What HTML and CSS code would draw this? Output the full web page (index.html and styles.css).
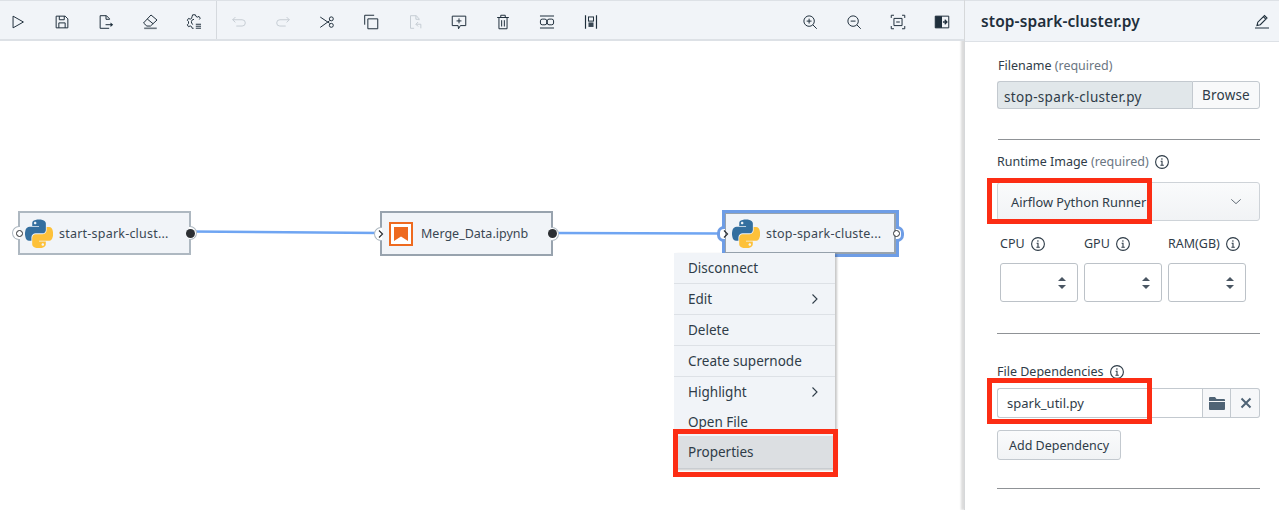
FILE: index.html
```html
<!DOCTYPE html>
<html lang="en">
<head>
<meta charset="utf-8">
<title>stop-spark-cluster.py</title>
<link rel="stylesheet" href="styles.css">
</head>
<body>
<svg class="defs" width="0" height="0" aria-hidden="true">
  <symbol id="py" viewBox="0 0 111 112">
    <path fill="#346f9f" d="M54.9.9c-4.6 0-9 .4-12.8 1.1C30.7 4 28.7 8.2 28.7 16v10.3h27v3.4H18.6c-7.8 0-14.7 4.7-16.8 13.7-2.5 10.3-2.6 16.7 0 27.4 1.9 8 6.5 13.7 14.3 13.7h9.3V72.1c0-8.9 7.7-16.7 16.8-16.7h27c7.5 0 13.5-6.2 13.5-13.7V16c0-7.3-6.2-12.8-13.5-14C65.8 1.2 59.5.9 54.9.9zM40.3 9.2c2.8 0 5.1 2.3 5.1 5.1s-2.3 5.1-5.1 5.1-5.1-2.3-5.1-5.1 2.3-5.1 5.1-5.1z"/>
    <path fill="#fdc13a" d="M85.8 29.7v12c0 9.3-7.9 17.2-16.8 17.2H42c-7.4 0-13.5 6.3-13.5 13.7v25.7c0 7.3 6.4 11.6 13.5 13.7 8.5 2.5 16.7 3 27 0 6.8-2 13.5-5.9 13.5-13.7V88H55.5v-3.4h40.5c7.8 0 10.8-5.5 13.5-13.7 2.8-8.5 2.7-16.6 0-27.4-1.9-7.8-5.6-13.7-13.5-13.7H85.8zM70.6 94.8c2.8 0 5.1 2.3 5.1 5.1s-2.3 5.1-5.1 5.1-5.1-2.3-5.1-5.1 2.3-5.1 5.1-5.1z"/>
  </symbol>
  <symbol id="info" viewBox="0 0 16 16">
    <circle cx="8" cy="8" r="6.4" fill="none" stroke="#2c3a46" stroke-width="1.1"/>
    <path d="M6.4 11.3h3.4M8 11.3V7.2H6.6" fill="none" stroke="#2c3a46" stroke-width="1.1"/>
    <circle cx="7.9" cy="5" r=".8" fill="#2c3a46"/>
  </symbol>
  <symbol id="spin" viewBox="0 0 8 14">
    <path d="M4 1 8 5H0zM4 13 0 9h8z" fill="#4a5663"/>
  </symbol>
</svg>

<main class="app">
  <section class="editor">
    <div class="toolbar">
      <div class="tool-group">
        <span class="tool"><svg class="ico" viewBox="0 0 20 20"><path d="M4.500 3.500v13L16 10z"/></svg></span>
        <span class="tool"><svg class="ico" viewBox="0 0 20 20"><path d="M3.500 3.500h10l3 3v10h-13zM7 3.500v4h5.500v-4M6.500 16.500v-5.500h7v5.500"/></svg></span>
        <span class="tool"><svg class="ico" viewBox="0 0 20 20"><path d="M14 7V6.500L10.500 3H3.500v14h10M10 3v4h4M9.500 13H16"/><path class="fill" d="M15 10.500 18 13l-3 2.500z"/></svg></span>
        <span class="tool"><svg class="ico" viewBox="0 0 20 20"><path d="M2.800 11.100 11.100 2.200l6.700 5.600-7.300 6.700H6.500zM7 6.700l6.500 5.300"/><path class="thick" d="M3.500 17h14"/></svg></span>
        <span class="tool"><svg class="ico" viewBox="0 0 20 20"><path d="M9.500 17H8l-.7-1.900-1.500-.7-1.900.8-1.300-2 1.300-1.500V9.500L2.600 8l1.300-2 1.900.8 1.500-.8L8 3.500 8.500 2h3l.7 1.800 1.500.8 1.900-.8 1.300 2-1 1.400M10 7a3 3 0 0 0-1 5.800M12 12.500h5.800M12 14.700h5.800M12 16.900h5.800"/></svg></span>
      </div>
      <div class="tool-group second">
        <span class="tool off"><svg class="ico" viewBox="0 0 20 20"><path d="M3 7.500h10.500a3.500 3.500 0 0 1 0 7H7M3 7.500 6 4.500M3 7.500l3 3"/></svg></span>
        <span class="tool off"><svg class="ico" viewBox="0 0 20 20"><path d="M17 7.500H6.500a3.500 3.500 0 0 0 0 7H13M17 7.500l-3-3M17 7.500l-3 3"/></svg></span>
        <span class="tool"><svg class="ico" viewBox="0 0 20 20"><path d="M2.500 4.500 13 11.500M2.500 16 13 8.500"/><circle cx="14.800" cy="6.500" r="2.200"/><circle cx="14.800" cy="13.700" r="2.200"/></svg></span>
        <span class="tool"><svg class="ico" viewBox="0 0 20 20"><path d="M6.500 6.500h11v11h-11zM3 13V2.500h10.500"/></svg></span>
        <span class="tool off"><svg class="ico" viewBox="0 0 20 20"><path d="M14.500 8V6.500L11.500 3H5v14h4M11 3v4h3.500M11 12.500h5.500V17M11 12.500l2.500-2.500M11 12.500l2.500 2.500"/></svg></span>
        <span class="tool"><svg class="ico" viewBox="0 0 20 20"><path d="M2.500 3.500h15v10.500H11.500l-2 3.500-.5-3.500H2.500zM10 6v5.500M7.300 8.800h5.400"/></svg></span>
        <span class="tool"><svg class="ico" viewBox="0 0 20 20"><path d="M3.500 5h13M7.500 5V2.500h5V5M5.500 5v12.500h9V5M8.500 8v7M11.500 8v7"/></svg></span>
        <span class="tool"><svg class="ico" viewBox="0 0 20 20"><path class="bar" d="M2.200 3.300h15.600M2.200 16.700h15.600"/><rect x="2.700" y="6.800" width="7" height="6.300" rx="2"/><rect x="10.300" y="6.800" width="7" height="6.300" rx="2"/></svg></span>
        <span class="tool"><svg class="ico" viewBox="0 0 20 20"><path class="bar" d="M3.900 2.500v15M16.100 2.500v15"/><rect x="7.200" y="4.400" width="5.600" height="4.600"/><rect class="fill" x="7.200" y="10.500" width="5.600" height="5"/></svg></span>
      </div>
      <div class="tool-group end">
        <span class="tool"><svg class="ico" viewBox="0 0 20 20"><circle cx="9" cy="9" r="5.800"/><path d="m13.200 13.200 4.300 4.300M9 6.300v5.400M6.300 9h5.400"/></svg></span>
        <span class="tool"><svg class="ico" viewBox="0 0 20 20"><circle cx="9" cy="9" r="5.800"/><path d="m13.200 13.200 4.300 4.300M6.300 9h5.400"/></svg></span>
        <span class="tool"><svg class="ico" viewBox="0 0 20 20"><path d="M2.500 5.500v-3h3M14.500 2.500h3v3M17.500 14.500v3h-3M5.500 17.500h-3v-3M5.500 6h9v8h-9zM8 10h4"/></svg></span>
        <span class="tool"><svg class="ico" viewBox="0 0 20 20"><path d="M2.500 3.500h15v13h-15z"/><path class="fill" d="M2.500 3.500H10v13H2.500z"/><path class="arrow" d="M11 10h4.500M13 7.500l2.500 2.500-2.500 2.500"/></svg></span>
      </div>
    </div>

    <div class="canvas">
      <svg class="links" width="964" height="469" viewBox="0 0 964 469" aria-hidden="true">
        <path d="M190 190.500 380 192M552 192 722 192.500"/>
      </svg>

      <div class="node node-a">
        <span class="port port-in"><i class="dot hollow"></i></span>
        <svg class="py"><use href="#py"/></svg>
        <span class="node-label">start-spark-clust...</span>
        <span class="port port-out"><i class="dot solid"></i></span>
      </div>

      <div class="node node-b">
        <span class="port port-in"><svg class="chev" viewBox="0 0 8 10"><path d="m2 1.500 3.500 3.500L2 8.500"/></svg></span>
        <span class="nb"><svg viewBox="0 0 16 16"><path d="M1 1h14v14L8 10.500 1 15z"/></svg></span>
        <span class="node-label plain">Merge_Data.ipynb</span>
        <span class="port port-out"><i class="dot solid"></i></span>
      </div>

      <div class="node node-c">
        <span class="port port-in"><svg class="chev" viewBox="0 0 8 10"><path d="m2 1.500 3.500 3.500L2 8.500"/></svg></span>
        <svg class="py"><use href="#py"/></svg>
        <span class="node-label">stop-spark-cluste...</span>
        <span class="port port-out"><i class="dot hollow"></i></span>
      </div>

      <ul class="menu">
        <li class="menu-item sep">Disconnect</li>
        <li class="menu-item sep">Edit<svg class="caret" viewBox="0 0 8 12"><path d="m1.500 1.500 4.500 4.500-4.500 4.500"/></svg></li>
        <li class="menu-item sep">Delete</li>
        <li class="menu-item sep">Create supernode</li>
        <li class="menu-item row-high">Highlight<svg class="caret" viewBox="0 0 8 12"><path d="m1.500 1.500 4.500 4.500-4.500 4.500"/></svg></li>
        <li class="menu-item row-open">Open File</li>
        <li class="menu-item active">Properties</li>
      </ul>
      <div class="mark mark-props"></div>
    </div>
  </section>

  <aside class="panel">
    <header class="panel-head">
      <h1 class="panel-title">stop-spark-cluster.py</h1>
      <svg class="edit" viewBox="0 0 16 16"><path d="M1 15h14M3 12.500l.8-3.300 6.700-6.700 2.500 2.500-6.700 6.700zM9.300 3.700l2.500 2.500"/></svg>
    </header>
    <div class="panel-body">
      <div class="field">
        <div class="label first-label">Filename <span class="req">(required)</span></div>
        <div class="file-row">
          <div class="file-name">stop-spark-cluster.py</div>
          <div class="file-btn">Browse</div>
        </div>
      </div>
      <hr class="rule r1">
      <div class="field">
        <div class="label runtime-label">Runtime Image <span class="req">(required)</span><svg class="info"><use href="#info"/></svg></div>
        <div class="select">Airflow Python Runner<svg class="select-arrow" viewBox="0 0 14 8"><path d="m1.500 1.500 5.500 5 5.500-5"/></svg></div>
        <div class="resources">
          <div class="res">
            <div class="label res-label">CPU<svg class="info"><use href="#info"/></svg></div>
            <div class="num"><svg class="spin"><use href="#spin"/></svg></div>
          </div>
          <div class="res">
            <div class="label res-label">GPU<svg class="info"><use href="#info"/></svg></div>
            <div class="num"><svg class="spin"><use href="#spin"/></svg></div>
          </div>
          <div class="res">
            <div class="label res-label">RAM(GB)<svg class="info"><use href="#info"/></svg></div>
            <div class="num"><svg class="spin"><use href="#spin"/></svg></div>
          </div>
        </div>
      </div>
      <hr class="rule r2">
      <div class="field">
        <div class="label dep-label">File Dependencies<svg class="info"><use href="#info"/></svg></div>
        <div class="dep-row">
          <div class="dep-input">spark_util.py</div>
          <div class="dep-btn"><svg class="folder" viewBox="0 0 16 14"><path d="M0 2a1 1 0 0 1 1-1h5l1.500 2H15a1 1 0 0 1 1 1v1H0zM0 6h16v7a1 1 0 0 1-1 1H1a1 1 0 0 1-1-1z"/></svg></div>
          <div class="dep-btn"><svg class="close" viewBox="0 0 12 12"><path d="m1.500 1.500 9 9M10.500 1.500l-9 9"/></svg></div>
        </div>
        <div class="add-btn">Add Dependency</div>
      </div>
      <hr class="rule r3">
    </div>
    <div class="mark mark-runtime"></div>
    <div class="mark mark-dep"></div>
  </aside>
</main>
</body>
</html>
```

FILE: styles.css
```css
* { box-sizing: border-box; }
html, body { margin: 0; height: 510px; overflow: hidden; background: #fff; }
body { font-family: "Noto Sans", "Open Sans", sans-serif; font-size: 13px; color: #2f3c48; }
.defs { position: absolute; }
.app { display: flex; height: 510px; }

.editor { width: 964px; flex: none; display: flex; flex-direction: column; }
.toolbar { position: relative; z-index: 1; height: 41px; flex: none; display: flex; background: #f1f4f8; border-top: 1px solid #dde1e6; border-bottom: 2px solid #dde1e6; }
.tool-group { display: flex; gap: 8px; align-items: center; padding-top: 3px; }
.second { margin-left: 4px; border-left: 1px solid #d5d9de; padding-left: 4px; }
.end { margin-left: auto; margin-right: 4px; }
.tool { width: 36px; height: 36px; display: flex; align-items: center; justify-content: center; }
.ico { width: 18px; height: 18px; fill: none; stroke: #1f2f3c; stroke-width: 1.100; }
.ico .fill { fill: #1f2f3c; stroke: none; }
.ico .thick { stroke: #6d7780; stroke-width: 1.800; }
.ico .bar { stroke-width: 1.300; }
.ico .arrow { stroke-width: 1.400; }
.ico rect.fill { fill: #3a4854; }
.off .ico { stroke: #c5ccd3; }

.canvas { position: relative; flex: 1; background: #fff; }
.links { position: absolute; left: 0; top: 0; }
.links path { fill: none; stroke: #6fa5f2; stroke-width: 2.400; }

.node { position: absolute; display: flex; align-items: center; background: #f1f4f8; border: 2px solid #aeb8c1; }
.node-a { left: 18px; top: 170px; width: 173px; height: 44px; padding-left: 5px; }
.node-b { left: 380px; top: 170px; width: 173px; height: 45px; padding-left: 7px; border-color: #98a3ae; }
.node-c { left: 722px; top: 169px; width: 177px; height: 47px; padding-left: 7px; border: 3px solid #6e9de6; box-shadow: inset -1px -1px 0 1px #98a3ae, inset 1px 1px 0 0 #98a3ae; }
.py { width: 28px; height: 29px; flex: none; }
.node-label { margin-left: 6px; white-space: nowrap; font-size: 12.500px; letter-spacing: .22px; color: #3a4753; }
.node-label.plain { margin-left: 8px; letter-spacing: 0; }

.nb { width: 24px; height: 24px; flex: none; display: flex; align-items: center; justify-content: center; background: #fff; border: 2px solid #ee6a1f; }
.nb svg { width: 16px; height: 16px; fill: #ee6a1f; }

.port { position: absolute; top: 50%; width: 8px; height: 14px; margin-top: -7px; background: #fff; border: 1px solid #aeb8c1; }
.port-in { left: -8px; border-right: 0; border-radius: 7px 0 0 7px; }
.port-out { right: -8px; border-left: 0; border-radius: 0 7px 7px 0; }
.node-c .port { border-color: #6e9de6; border-width: 3px; height: 16px; margin-top: -8px; }
.node-c .port-in { border-right: 0; }
.node-c .port-out { border-left: 0; }
.dot { position: absolute; top: 50%; border-radius: 50%; }
.dot.solid { width: 9px; height: 9px; margin-top: -4.500px; left: -3.500px; background: #2c2f33; }
.dot.hollow { width: 7px; height: 7px; margin-top: -3.500px; border: 1.500px solid #2c2f33; background: #fff; }
.port-in .dot.hollow { left: 2.500px; }
.port-out .dot.hollow { left: -3.500px; }
.chev { position: absolute; left: 1.500px; top: 50%; margin-top: -5px; width: 8px; height: 10px; fill: none; stroke: #2c2f33; stroke-width: 1.200; }

.menu { position: absolute; left: 674px; top: 212px; width: 161px; margin: 0; padding: 0; list-style: none; background: #f1f4f8; box-shadow: 2px 1px 2px rgba(0,0,0,.22); }
.menu-item { height: 31px; padding-left: 14px; display: flex; align-items: center; justify-content: space-between; padding-right: 16px; font-size: 13.500px; color: #2f3c48; }
.menu-item.sep { border-bottom: 1px solid #dde1e6; }
.menu-item.row-high { height: 30px; }
.menu-item.row-open { height: 29px; }
.menu-item.active { background: #dcdfe2; height: 33px; border-bottom: 1px solid #c9cdd1; }
.caret { width: 8px; height: 12px; fill: none; stroke: #2f3c48; stroke-width: 1.100; }

.mark { position: absolute; border: 5px solid #fc2d14; pointer-events: none; }
.mark-props { left: 673px; top: 388px; width: 165px; height: 48px; }
.mark-runtime { left: 22px; top: 178px; width: 165px; height: 46px; }
.mark-dep { left: 22px; top: 378px; width: 165px; height: 46px; }

.panel { position: relative; flex: 1; border-left: 1px solid #d6d8da; box-shadow: -3px 0 2px rgba(0,0,0,.14); }
.panel-head { height: 42px; display: flex; align-items: center; justify-content: space-between; padding: 0 9px 0 16px; background: #f1f4f8; border-top: 1px solid #dde1e6; border-bottom: 1px solid #dde1e6; }
.panel-title { margin: 0; font-size: 15.500px; font-weight: 600; letter-spacing: .1px; color: #1f2f3c; }
.edit { width: 16px; height: 16px; fill: none; stroke: #1f2f3c; stroke-width: 1.100; }
.panel-body { padding: 15px 19px 0 32px; }
.label { font-size: 12.500px; line-height: 17px; color: #2f3c48; display: flex; align-items: center; white-space: pre; }
.req { color: #6b7682; }
.info { width: 16px; height: 16px; margin-left: 5px; flex: none; }
.first-label { margin-left: 1px; }

.file-row { display: flex; height: 28px; margin-top: 7px; }
.file-name { width: 195px; display: flex; align-items: center; padding-left: 6px; padding-top: 4px; background: #e1e7ea; border: 1px solid #c3c9cf; border-right: 0; border-radius: 3px 0 0 3px; font-size: 13.500px; letter-spacing: .33px; color: #2f3c48; }
.file-btn { flex: 1; display: flex; align-items: center; justify-content: center; padding-bottom: 1px; background: #f8f9fa; border: 1px solid #c3c9cf; border-radius: 0 3px 3px 0; font-size: 13.500px; letter-spacing: .2px; }

.rule { height: 1px; margin: 0; border: 0; background: #8f9296; }
.r1 { margin: 30px 0 0 1px; }
.r2 { margin-top: 31px; }
.r3 { margin-top: 28px; }

.runtime-label { margin-top: 13px; }
.select { height: 39px; margin-top: 12px; padding: 0 17px 0 13px; display: flex; align-items: center; justify-content: space-between; background: linear-gradient(#fafbfc, #f1f3f5); border: 1px solid #ced3d8; border-radius: 3px; font-size: 12.800px; color: #2f3c48; }
.select-arrow { width: 12px; height: 7px; fill: none; stroke: #5a6570; stroke-width: 1.100; }
.resources { display: flex; gap: 6px; padding-left: 3px; margin-top: 14px; }
.res { width: 78px; }
.res-label { height: 17px; }
.num { height: 39px; margin-top: 11px; display: flex; align-items: center; justify-content: flex-end; padding-right: 11px; background: #fff; border: 1px solid #bcc2c8; border-radius: 3px; }
.spin { width: 8px; height: 14px; }

.dep-label { margin-top: 29px; }
.dep-row { display: flex; height: 30px; margin-top: 8px; }
.dep-input { width: 205px; display: flex; align-items: center; padding-left: 9px; border: 1px solid #c3c9cf; border-right: 0; border-radius: 3px 0 0 3px; font-size: 13px; }
.dep-btn { width: 29px; display: flex; align-items: center; justify-content: center; background: #f6f7f9; border: 1px solid #c3c9cf; }
.dep-btn + .dep-btn { border-left: 0; border-radius: 0 3px 3px 0; padding-left: 1px; }
.folder { width: 16px; height: 14px; fill: #4f6375; }
.close { width: 12px; height: 12px; fill: none; stroke: #4f6375; stroke-width: 2; }
.add-btn { width: 124px; height: 30px; margin-top: 12px; display: flex; align-items: center; justify-content: center; background: linear-gradient(#fafbfc, #f1f3f5); border: 1px solid #c3c9cf; border-radius: 3px; font-size: 12.500px; }
```
